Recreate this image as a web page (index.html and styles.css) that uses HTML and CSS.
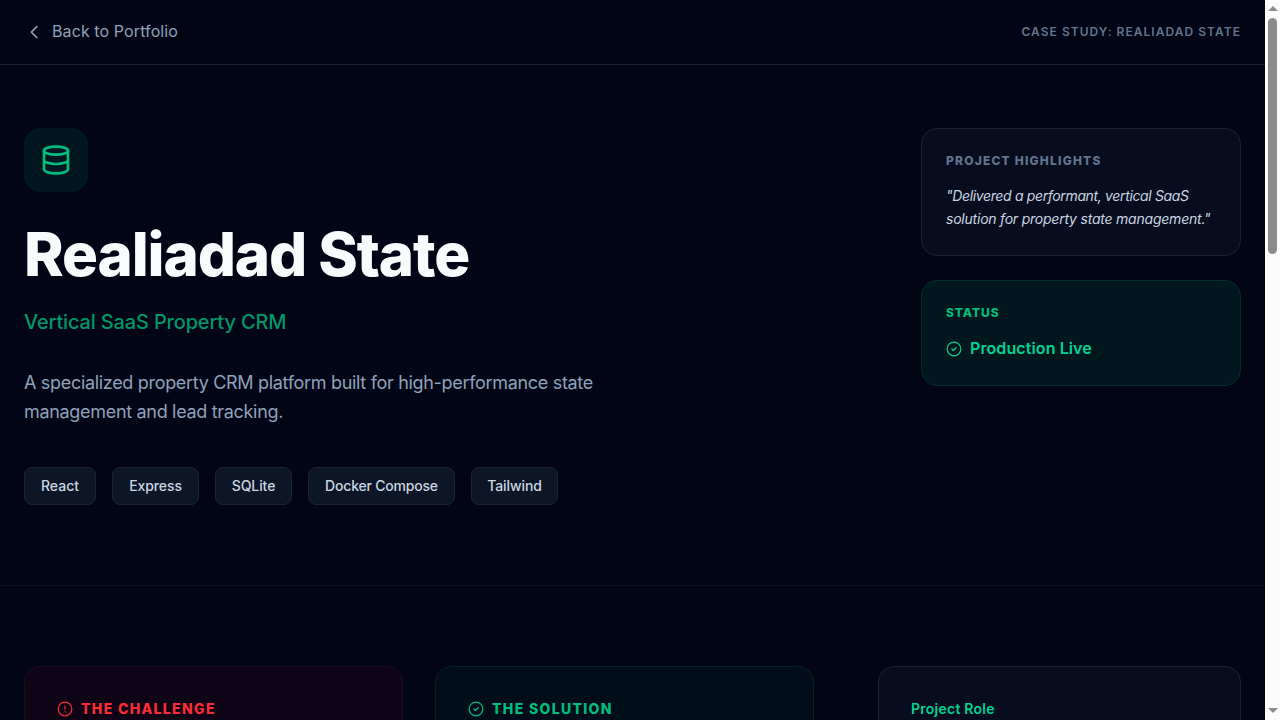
FILE: index.html
```html
<!DOCTYPE html>
<html lang="en">
<head>
<meta charset="utf-8">
<title>Realiadad State</title>
<link rel="stylesheet" href="styles.css">
</head>
<body>
<div class="page">
  <header class="nav">
    <a class="back">
      <svg class="chevron" viewBox="0 0 20 20" width="20" height="20"><path d="M12.8 5.6 7.3 11.1l5.5 5.5"/></svg>
      <span>Back to Portfolio</span>
    </a>
    <span class="nav-label">CASE STUDY: REALIADAD STATE</span>
  </header>
  <section class="hero">
    <div class="intro">
      <div class="badge">
        <svg viewBox="0 0 24 24" width="32" height="32"><ellipse cx="12" cy="5" rx="9" ry="3"/><path d="M3 5v14a9 3 0 0 0 18 0V5M3 12a9 3 0 0 0 18 0"/></svg>
      </div>
      <h1 class="title">Realiadad State</h1>
      <p class="subtitle">Vertical SaaS Property CRM</p>
      <p class="lead">A specialized property CRM platform built for high-performance state<br>management and lead tracking.</p>
      <ul class="tags">
        <li class="tag tag-react">React</li>
        <li class="tag tag-express">Express</li>
        <li class="tag tag-sqlite">SQLite</li>
        <li class="tag tag-docker">Docker Compose</li>
        <li class="tag tag-tailwind">Tailwind</li>
      </ul>
    </div>
    <aside class="side">
      <div class="card highlights">
        <h2 class="eyebrow">PROJECT HIGHLIGHTS</h2>
        <p class="quote">"Delivered a performant, vertical SaaS<br><span class="quote-end">solution for property state management."</span></p>
      </div>
      <div class="card status">
        <h2 class="eyebrow eyebrow-status">STATUS</h2>
        <p class="live">
          <svg class="ring" viewBox="0 0 16 16" width="16" height="16"><circle cx="8" cy="8" r="6.8"/><path d="m5.8 8 1.5 1.5 2.9-2.8"/></svg>
          <span class="live-text">Production Live</span>
        </p>
      </div>
    </aside>
  </section>
  <section class="details">
    <div class="panel challenge">
      <h3 class="panel-title">
        <svg class="ring" viewBox="0 0 16 16" width="16" height="16"><circle cx="8" cy="8" r="6.8"/><path d="M8 5v3.3M8 10.6v.3"/></svg>
        <span>THE CHALLENGE</span>
      </h3>
    </div>
    <div class="panel solution">
      <h3 class="panel-title">
        <svg class="ring" viewBox="0 0 16 16" width="16" height="16"><circle cx="8" cy="8" r="6.8"/><path d="m5.8 8 1.5 1.5 2.9-2.8"/></svg>
        <span>THE SOLUTION</span>
      </h3>
    </div>
    <div class="panel role">
      <h3 class="role-title">Project Role</h3>
    </div>
  </section>
</div>
<div class="scrollbar">
  <svg class="arrow" viewBox="0 0 10 5" width="10" height="5"><path d="M0 5 5 0l5 5z"/></svg>
  <div class="thumb"></div>
  <svg class="arrow arrow-down" viewBox="0 0 10 5" width="10" height="5"><path d="M0 0h10L5 5z"/></svg>
</div>
</body>
</html>
```
FILE: styles.css
```css
* { box-sizing: border-box; margin: 0; padding: 0; }
body {
  display: flex;
  width: 1280px;
  height: 720px;
  overflow: hidden;
  background: #020516;
  font-family: Inter, "Liberation Sans", sans-serif;
  white-space: nowrap;
}
svg { flex: none; fill: none; stroke: currentColor; stroke-linecap: round; stroke-linejoin: round; }
.page { width: 1265px; height: 720px; overflow: hidden; }
.nav {
  display: flex;
  justify-content: space-between;
  align-items: center;
  height: 65px;
  padding: 0 24px 2px;
  border-bottom: 1px solid #1b2130;
}
.back { display: flex; align-items: center; gap: 8px; color: #90a1b9; font-size: 16px; line-height: 24px; letter-spacing: 0.1px; }
.chevron { stroke-width: 1.5; }
.nav-label { color: #62748e; font-size: 12px; font-weight: 600; letter-spacing: 1.04px; }
.hero {
  display: flex;
  justify-content: space-between;
  height: 521px;
  padding: 63px 24px 0;
  border-bottom: 1px solid #0e1220;
}
.badge {
  display: flex;
  align-items: center;
  justify-content: center;
  width: 64px;
  height: 64px;
  border-radius: 16px;
  background: #02161f;
  color: #00bc7d;
}
.badge svg { stroke-width: 2; }
.title { margin-top: 32px; color: #f8fafc; font-size: 60px; line-height: 60px; font-weight: 800; letter-spacing: -1.1px; }
.subtitle { margin-top: 24px; color: #009767; font-size: 20px; line-height: 28px; font-weight: 500; letter-spacing: -0.16px; }
.lead { margin-top: 32px; color: #90a1b9; font-size: 18px; line-height: 29.25px; letter-spacing: -0.315px; }
.tags { display: flex; gap: 16px; margin-top: 40px; list-style: none; }
.tag {
  height: 38px;
  border: 1px solid #1b2536;
  border-radius: 8px;
  background: #0d1626;
  color: #cad5e2;
  font-size: 14px;
  line-height: 36px;
  font-weight: 500;
  letter-spacing: -0.1px;
  text-align: center;
}
.tag-react { width: 72px; letter-spacing: 0; }
.tag-express { width: 87px; }
.tag-sqlite { width: 77px; }
.tag-docker { width: 147px; letter-spacing: -0.2px; }
.tag-tailwind { width: 87px; }
.side { display: flex; flex-direction: column; gap: 24px; width: 320px; }
.card { padding: 24px; border: 1px solid #1a2434; border-radius: 16px; background: #070d1e; }
.highlights { height: 128px; }
.status { height: 106px; border-color: #032e2e; background: #01171e; color: #00bc7d; }
.eyebrow { color: #62748e; font-size: 12px; line-height: 16px; font-weight: 800; letter-spacing: 1.21px; }
.eyebrow-status { color: #00bc7d; letter-spacing: 0.95px; }
.quote { margin-top: 16px; color: #cad5e2; font-size: 14px; line-height: 22.75px; font-style: italic; letter-spacing: -0.35px; }
.quote-end { letter-spacing: -0.22px; }
.live { display: flex; align-items: center; gap: 8px; margin-top: 16px; color: #00d492; font-size: 16px; line-height: 24px; font-weight: 600; letter-spacing: 0.1px; }
.live-text { padding-bottom: 2px; line-height: 22px; }
.ring { stroke-width: 1.2; }
.details { display: flex; padding: 80px 24px 0; }
.panel { height: 240px; padding: 32px; border: 1px solid #1a2434; border-radius: 16px; background: #070d1e; }
.challenge { width: 379px; border-color: #1c0d1c; background: #0f0415; color: #fb2c36; }
.solution { width: 379px; margin-left: 32px; border-color: #061f2a; background: #010e1a; color: #00bc7d; }
.role { width: 363px; margin-left: 64px; color: #00d492; }
.panel-title { display: flex; align-items: center; gap: 8px; font-size: 14px; line-height: 20px; font-weight: 800; letter-spacing: 1.34px; }
.role-title { font-size: 14px; line-height: 20px; font-weight: 600; letter-spacing: 0.25px; }
.scrollbar { display: flex; flex-direction: column; align-items: center; width: 15px; height: 720px; padding: 6px 0 7px; background: #fcfcfc; }
.arrow { fill: #8b8b8b; stroke: none; }
.thumb { width: 9px; height: 236px; margin-top: 7px; border-radius: 5px; background: #8b8b8b; }
.arrow-down { margin-top: auto; }
```
